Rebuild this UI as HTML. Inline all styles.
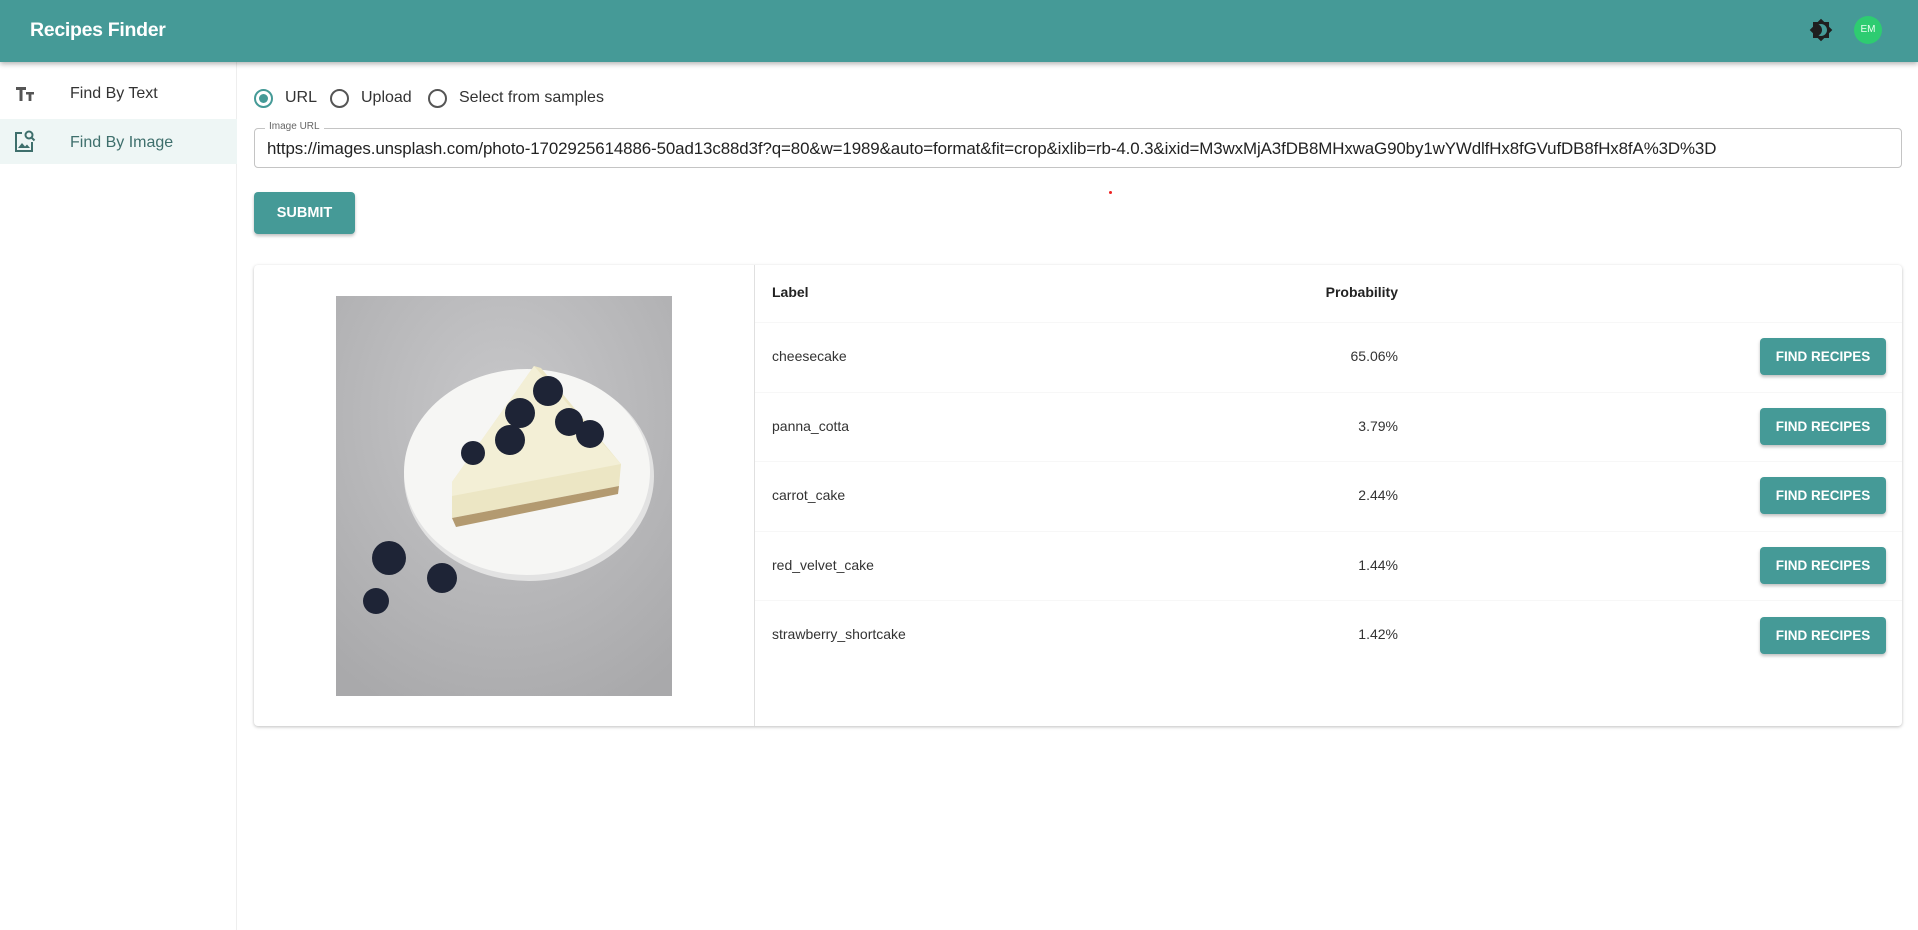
<!DOCTYPE html>
<html><head><meta charset="utf-8"><style>
*{box-sizing:border-box;margin:0;padding:0}
body{width:1918px;height:930px;overflow:hidden;background:#fff;font-family:"Liberation Sans",sans-serif;color:#222;position:relative}
.hdr{position:absolute;left:0;top:0;width:1918px;height:62px;background:#459a97;box-shadow:0 2px 5px rgba(0,0,0,.3);z-index:2}
.hdr h1{position:absolute;left:30px;top:19px;color:#fff;font-size:19.5px;font-weight:bold;letter-spacing:-0.3px}
.av{position:absolute;left:1854px;top:16px;width:28px;height:28px;border-radius:50%;background:#2ecc71;color:#e9fff0;font-size:10px;text-align:center;line-height:28px}
.side{position:absolute;left:0;top:62px;width:237px;height:868px;border-right:1px solid #eee}
.it{position:absolute;left:0;width:237px;height:45px;font-size:16px;color:#333}
.it span{position:absolute;left:70px;top:13px}
.sel{background:#eef6f5}
.sel span{color:#3e6f6c}
.radio{position:absolute;top:89px;width:19px;height:19px;border:2px solid #555;border-radius:50%}
.radio.on{border-color:#459a97}
.radio.on:after{content:"";position:absolute;left:3px;top:3px;width:9px;height:9px;border-radius:50%;background:#459a97}
.rl{position:absolute;top:89px;font-size:16px;color:#333}
.field{position:absolute;left:254px;top:128px;width:1648px;height:40px;border:1px solid #c4c4c4;border-radius:4px}
.field .lg{position:absolute;left:10px;top:-8px;background:#fff;padding:0 4px;font-size:10px;color:#666}
.field .v{position:absolute;left:12px;top:10px;font-size:16.9px;color:#222;white-space:nowrap;letter-spacing:-0.1px}
.btn{position:absolute;background:#459a97;color:#fff;font-weight:bold;border-radius:4px;box-shadow:0 2px 3px rgba(0,0,0,.25);text-align:center}
.card{position:absolute;left:254px;top:265px;width:1648px;height:461px;border-radius:4px;box-shadow:0 1px 3px rgba(0,0,0,.25)}
.vd{position:absolute;left:500px;top:0;width:1px;height:461px;background:#e0e0e0}
.th,.td{position:absolute;font-size:14px}
.th{font-weight:bold;color:#222}
.td{color:#333}
.sep{position:absolute;left:501px;width:1147px;height:1px;background:#f7f7f7}
</style></head><body>
<div class="hdr"><h1>Recipes Finder</h1>
<svg style="position:absolute;left:1809px;top:18px" width="24" height="24" viewBox="0 0 24 24"><path fill="#1f1f1f" d="M20 8.69V4h-4.69L12 .69 8.69 4H4v4.690L.69 12 4 15.31V20h4.69L12 23.310 15.31 20H20v-4.690L23.310 12 20 8.690zM12 18c-.89 0-1.74-.2-2.5-.55C11.56 16.5 13 14.42 13 12s-1.44-4.5-3.5-5.45C10.26 6.2 11.11 6 12 6c3.31 0 6 2.69 6 6s-2.69 6-6 6z"/></svg>
<div class="av">EM</div></div>
<div class="side">
<div class="it" style="top:10px"><svg style="position:absolute;left:15px;top:14px" width="20" height="16" viewBox="0 0 20 16"><path fill="#555" d="M1 1h10v3H7.5v11h-3V4H1zM11 6h8v2.5h-2.6V15h-2.8V8.5H11z"/></svg><span>Find By Text</span></div>
<div class="it sel" style="top:57px"><svg style="position:absolute;left:14px;top:10px" width="22" height="24" viewBox="0 0 22 24"><path fill="none" stroke="#3e6f6c" stroke-width="2" d="M8 4H2v18h16v-9"/><circle cx="15" cy="6" r="3.5" fill="none" stroke="#3e6f6c" stroke-width="2"/><path stroke="#3e6f6c" stroke-width="2" d="M17.5 8.5L20.5 11.5"/><path fill="#3e6f6c" d="M4 19l4-5 3 3.5 2-2 3 3.5z"/></svg><span style="top:15px">Find By Image</span></div>
</div>
<div class="radio on" style="left:254px"></div><div class="rl" style="left:285px">URL</div>
<div class="radio" style="left:330px"></div><div class="rl" style="left:361px">Upload</div>
<div class="radio" style="left:428px"></div><div class="rl" style="left:459px">Select from samples</div>
<div class="field"><div class="lg">Image URL</div><div class="v">https://images.unsplash.com/photo-1702925614886-50ad13c88d3f?q=80&amp;w=1989&amp;auto=format&amp;fit=crop&amp;ixlib=rb-4.0.3&amp;ixid=M3wxMjA3fDB8MHxwaG90by1wYWdlfHx8fGVufDB8fHx8fA%3D%3D</div></div>
<div class="btn" style="left:254px;top:192px;width:101px;height:42px;line-height:42px;font-size:14.5px">SUBMIT</div>
<div style="position:absolute;left:1109px;top:191px;width:3px;height:3px;border-radius:50%;background:#e22"></div>
<div class="card">
<svg style="position:absolute;left:82px;top:31px" width="336" height="400" viewBox="0 0 336 400">
<defs><radialGradient id="g" cx="50%" cy="30%" r="80%"><stop offset="0" stop-color="#c8c8ca"/><stop offset="1" stop-color="#a9a9ab"/></radialGradient></defs>
<rect width="336" height="400" fill="url(#g)"/>
<ellipse cx="193" cy="180" rx="125" ry="105" fill="#e2e2e2"/>
<ellipse cx="191" cy="176" rx="123" ry="103" fill="#f6f6f4"/>
<path d="M116 186L198 70 205 72 285 168 283 190 116 222z" fill="#ece6c4"/>
<path d="M116 186L198 70 285 168 116 200z" fill="#f3efd6"/>
<path d="M116 222L283 190 282 198 120 231z" fill="#b39a70"/>
<g fill="#1e2436"><circle cx="212" cy="95" r="15"/><circle cx="184" cy="117" r="15"/><circle cx="233" cy="126" r="14"/><circle cx="254" cy="138" r="14"/><circle cx="174" cy="144" r="15"/><circle cx="137" cy="157" r="12"/><circle cx="53" cy="262" r="17"/><circle cx="106" cy="282" r="15"/><circle cx="40" cy="305" r="13"/></g>
</svg>
<div class="vd"></div>
<div class="th" style="left:518px;top:19px">Label</div>
<div class="th" style="left:1044px;top:19px;width:100px;text-align:right">Probability</div>
<div class="sep" style="top:57px"></div><div class="sep" style="top:127px"></div><div class="sep" style="top:196px"></div><div class="sep" style="top:266px"></div><div class="sep" style="top:335px"></div>
<div class="td" style="left:518px;top:83px">cheesecake</div><div class="td" style="left:1044px;top:83px;width:100px;text-align:right">65.06%</div>
<div class="td" style="left:518px;top:153px">panna_cotta</div><div class="td" style="left:1044px;top:153px;width:100px;text-align:right">3.79%</div>
<div class="td" style="left:518px;top:222px">carrot_cake</div><div class="td" style="left:1044px;top:222px;width:100px;text-align:right">2.44%</div>
<div class="td" style="left:518px;top:292px">red_velvet_cake</div><div class="td" style="left:1044px;top:292px;width:100px;text-align:right">1.44%</div>
<div class="td" style="left:518px;top:361px">strawberry_shortcake</div><div class="td" style="left:1044px;top:361px;width:100px;text-align:right">1.42%</div>
<div class="btn" style="left:1506px;top:73px;width:126px;height:37px;line-height:37px;font-size:13.5px">FIND RECIPES</div>
<div class="btn" style="left:1506px;top:143px;width:126px;height:37px;line-height:37px;font-size:13.5px">FIND RECIPES</div>
<div class="btn" style="left:1506px;top:212px;width:126px;height:37px;line-height:37px;font-size:13.5px">FIND RECIPES</div>
<div class="btn" style="left:1506px;top:282px;width:126px;height:37px;line-height:37px;font-size:13.5px">FIND RECIPES</div>
<div class="btn" style="left:1506px;top:352px;width:126px;height:37px;line-height:37px;font-size:13.5px">FIND RECIPES</div>
</div>
</body></html>
